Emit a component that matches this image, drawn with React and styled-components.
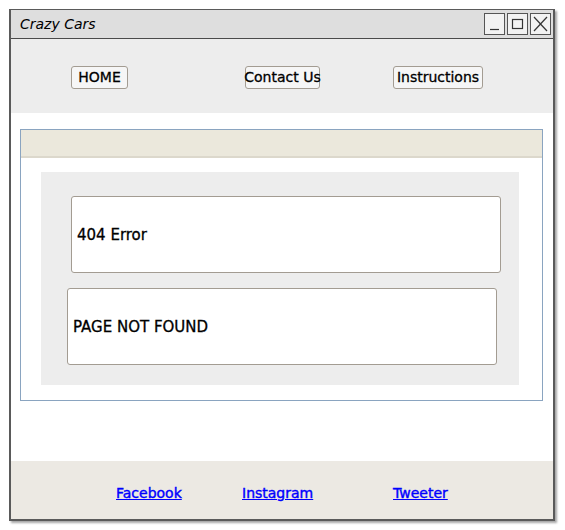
import React from 'react'
import styled, { createGlobalStyle } from 'styled-components'

const Global = createGlobalStyle`
  html, body {
    margin: 0;
    padding: 0;
    background: #ffffff;
  }
  body {
    font-family: "Comic Sans MS", "DejaVu Sans", sans-serif;
    color: #000;
  }
`

const Page = styled.div`
  width: 565px;
  height: 530px;
  padding: 9px 0 0 9px;
  box-sizing: border-box;
`

const Window = styled.div`
  width: 546px;
  height: 512px;
  box-sizing: border-box;
  border: 2px solid #5a5a5a;
  border-top-width: 1px;
  box-shadow: 2px 2px 2px rgba(0, 0, 0, 0.35);
  display: flex;
  flex-direction: column;
  background: #fff;
`

const TitleBar = styled.div`
  height: 28px;
  background: #dedede;
  border-bottom: 1px solid #4a4a4a;
  display: flex;
  align-items: center;
  justify-content: space-between;
  padding: 0 2px 0 9px;
`

const Title = styled.span`
  font-size: 14px;
  font-style: italic;
`

const Controls = styled.div`
  display: flex;
  gap: 2px;
`

const Ctrl = styled.div`
  width: 21px;
  height: 22px;
  border: 1px solid #555;
  box-sizing: border-box;
  background: #f2f2f2;
  display: flex;
  align-items: center;
  justify-content: center;
`

const Nav = styled.div`
  height: 74px;
  background: #ededed;
  display: flex;
  align-items: center;
  padding: 2px 0 0 60px;
  box-sizing: border-box;
`

const NavButton = styled.div`
  margin-left: ${p => p.$gap || 0}px;
  width: ${p => p.$w}px;
  height: 23px;
  box-sizing: border-box;
  border: 1px solid #a39c92;
  border-radius: 3px;
  background: #f6f6f6;
  display: flex;
  align-items: center;
  justify-content: center;
  font-size: 14px;
  white-space: nowrap;
  -webkit-text-stroke: 0.3px #000;
`

const Main = styled.div`
  flex: 1;
  padding: 16px 10px 0 9px;
`

const Panel = styled.div`
  border: 1px solid #8aa4c0;
  height: 272px;
  box-sizing: border-box;
  display: flex;
  flex-direction: column;
`

const PanelHeader = styled.div`
  height: 26px;
  background: #ebe8dc;
  border-bottom: 2px solid #dcd8cc;
`

const PanelBody = styled.div`
  padding: 14px 23px 13px 20px;
`

const GrayBox = styled.div`
  background: #ededed;
  height: 213px;
  box-sizing: border-box;
  padding: 24px 0 0 0;
  display: flex;
  flex-direction: column;
  gap: 15px;
`

const Card = styled.div`
  margin-left: ${p => p.$indent}px;
  width: 430px;
  height: 77px;
  box-sizing: border-box;
  border: 1px solid #a39c92;
  border-radius: 3px;
  background: #fff;
  display: flex;
  align-items: center;
  padding-left: 5px;
  font-size: 15px;
  -webkit-text-stroke: 0.3px #000;
`

const Footer = styled.div`
  height: 58px;
  background: #ece9e3;
  display: flex;
  align-items: center;
  padding: 5px 0 0 105px;
  box-sizing: border-box;
`

const Slot = styled.div`
  width: ${p => p.$w}px;
`

const FootLink = styled.a`
  color: #0000ff;
  text-decoration: underline;
  font-size: 14px;
  -webkit-text-stroke: 0.4px #0000ff;
  cursor: pointer;
`

const Icon = ({ kind }) => (
  <svg width="15" height="16" viewBox="0 0 15 16" fill="none" stroke="#333" strokeWidth="1.2">
    {kind === 'min' && <line x1="3" y1="13.5" x2="12" y2="13.5" />}
    {kind === 'max' && <rect x="2.5" y="3.5" width="10" height="9" />}
    {kind === 'close' && (
      <g>
        <line x1="1" y1="1" x2="14" y2="15" />
        <line x1="14" y1="1" x2="1" y2="15" />
      </g>
    )}
  </svg>
)

export default function App() {
  return (
    <Page>
      <Global />
      <Window>
        <TitleBar>
          <Title>Crazy Cars</Title>
          <Controls>
            <Ctrl><Icon kind="min" /></Ctrl>
            <Ctrl><Icon kind="max" /></Ctrl>
            <Ctrl><Icon kind="close" /></Ctrl>
          </Controls>
        </TitleBar>
        <Nav>
          <NavButton $w={57}>HOME</NavButton>
          <NavButton $w={75} $gap={117}>Contact Us</NavButton>
          <NavButton $w={90} $gap={73}>Instructions</NavButton>
        </Nav>
        <Main>
          <Panel>
            <PanelHeader />
            <PanelBody>
              <GrayBox>
                <Card $indent={30}>404 Error</Card>
                <Card $indent={26}>PAGE NOT FOUND</Card>
              </GrayBox>
            </PanelBody>
          </Panel>
        </Main>
        <Footer>
          <Slot $w={126}><FootLink>Facebook</FootLink></Slot>
          <Slot $w={151}><FootLink>Instagram</FootLink></Slot>
          <Slot $w={80}><FootLink>Tweeter</FootLink></Slot>
        </Footer>
      </Window>
    </Page>
  )
}
